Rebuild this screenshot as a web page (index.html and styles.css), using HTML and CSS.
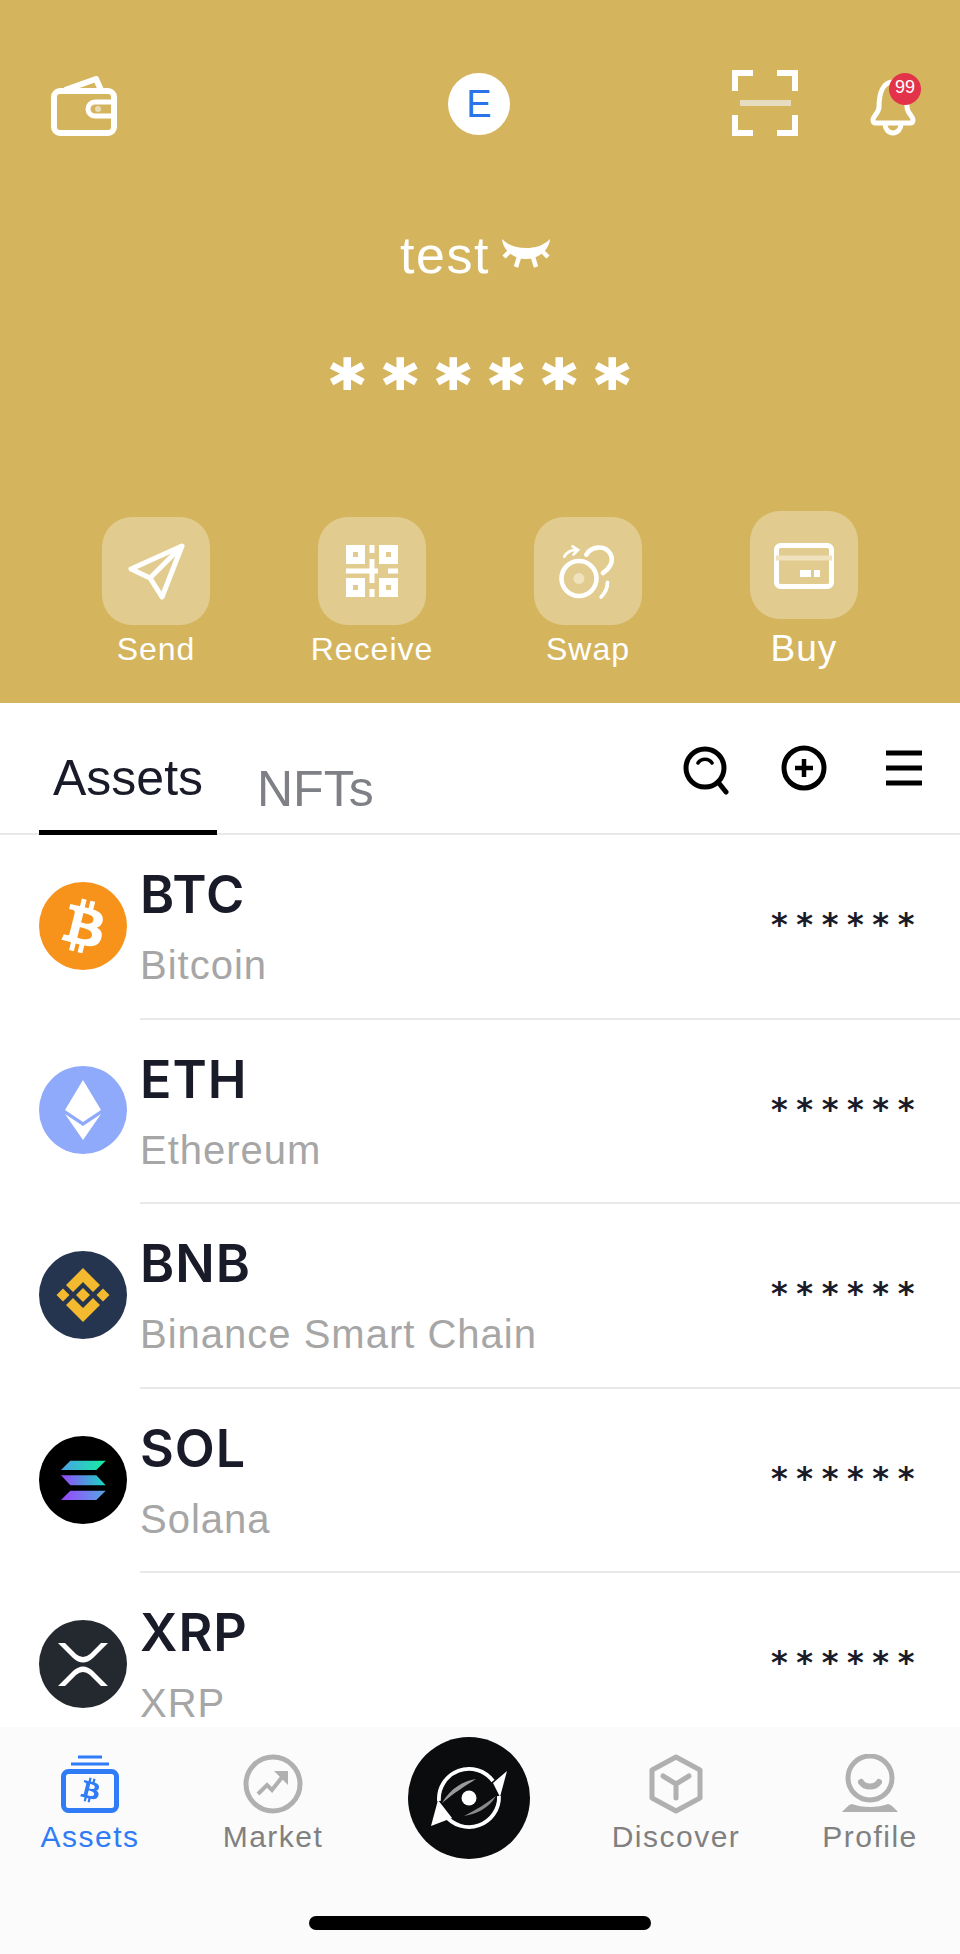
FILE: index.html
```html
<!DOCTYPE html>
<html lang="en">
  <head>
    <meta charset="UTF-8" />
    <meta name="viewport" content="width=device-width, initial-scale=1.0" />
    <title>Wallet Assets</title>
    <link rel="stylesheet" href="styles.css">
  </head>
  <body>
    <svg class="defs" width="0" height="0">
      <defs>
        <symbol id="btc" viewBox="0 0 32 32">
          <path d="M23.189 14.02c.314-2.096-1.283-3.223-3.465-3.975l.708-2.84-1.728-.43-.69 2.765c-.454-.114-.92-.22-1.385-.326l.695-2.783L15.596 6l-.708 2.839c-.376-.086-.746-.17-1.104-.26l.002-.009-2.384-.595-.46 1.846s1.283.294 1.256.312c.7.175.826.638.805 1.006l-.806 3.235c.048.012.11.03.18.057l-.183-.045-1.13 4.532c-.086.212-.303.531-.793.41.018.025-1.256-.313-1.256-.313l-.858 1.978 2.25.561c.418.105.828.215 1.231.318l-.715 2.872 1.727.43.708-2.84c.472.127.93.245 1.378.357l-.706 2.828 1.728.43.715-2.866c2.948.558 5.164.333 6.097-2.333.752-2.146-.037-3.385-1.588-4.192 1.13-.26 1.98-1.003 2.207-2.538zm-3.95 5.538c-.533 2.147-4.148.986-5.32.695l.95-3.805c1.172.293 4.929.872 4.37 3.11zm.535-5.569c-.487 1.953-3.495.96-4.47.717l.86-3.45c.975.243 4.118.696 3.61 2.733z"/>
        </symbol>
        <linearGradient id="sol-top" gradientUnits="userSpaceOnUse" x1="-22" y1="0" x2="23" y2="0">
          <stop offset="0" stop-color="#4aa0e6"/>
          <stop offset="1" stop-color="#14f1a0"/>
        </linearGradient>
        <linearGradient id="sol-mid" gradientUnits="userSpaceOnUse" x1="-22" y1="0" x2="23" y2="0">
          <stop offset="0" stop-color="#9945ff"/>
          <stop offset="1" stop-color="#14dcc0"/>
        </linearGradient>
        <linearGradient id="sol-low" gradientUnits="userSpaceOnUse" x1="-22" y1="0" x2="23" y2="0">
          <stop offset="0" stop-color="#9945ff"/>
          <stop offset="1" stop-color="#55a8e0"/>
        </linearGradient>
      </defs>
    </svg>

    <div class="phone">

      <header class="hero">
        <div class="top-bar">
          <svg class="wallet" viewBox="0 0 66 60" width="66" height="60" fill="none" stroke="#fff" stroke-width="6" stroke-linejoin="round">
            <rect x="3" y="15" width="60" height="42" rx="6"/>
            <path d="M14 14 L45 3 L50 14"/>
            <path d="M64 26 H44 a7 7 0 0 0 0 14 H64" stroke-width="5"/>
            <circle cx="47" cy="33" r="3" fill="#e9dcb6" stroke="none"/>
          </svg>
          <div class="logo"><span>E</span></div>
          <svg class="scan" viewBox="0 0 66 66" width="66" height="66" fill="none" stroke="#fff" stroke-width="6">
            <path d="M3 21 V3 H21"/>
            <path d="M45 3 H63 V21"/>
            <path d="M3 45 V63 H21"/>
            <path d="M45 63 H63 V45"/>
            <path d="M8 33 H59" stroke="#e6dcc0"/>
          </svg>
          <div class="bell">
            <svg viewBox="0 0 46 58" width="46" height="58" fill="none" stroke="#fff" stroke-width="5" stroke-linejoin="round">
              <path d="M23 3 C13 3 9 14 9 28 C9 34 3 37 3 41 C3 43 4 44 6 44 H40 C42 44 43 43 43 41 C43 37 37 34 37 28 C37 14 33 3 23 3 Z"/>
              <path d="M15 45 a8 9 0 0 0 16 0"/>
            </svg>
            <span class="badge">99</span>
          </div>
        </div>

        <div class="wallet-name">
          <span>test</span>
          <svg viewBox="0 0 50 34" width="50" height="34" fill="#fff" stroke="none">
            <path d="M1 1 C8 8 16 10 25 10 C34 10 42 8 49 1 C48 12 38 21 25 21 C12 21 2 12 1 1 Z"/>
            <path d="M8 14 L3 19 M18 19 L15 29 M32 19 L35 29 M42 14 L47 19" stroke="#fff" stroke-width="4.5"/>
          </svg>
        </div>

        <div class="balance">******</div>

        <div class="actions">
          <div class="action">
            <div class="action-icon">
              <svg viewBox="0 0 108 108" width="108" height="108" fill="none" stroke="#fff" stroke-width="5" stroke-linejoin="round">
                <path d="M80 29 L29 52 L48 61 L60 80 Z"/>
                <path d="M80 29 L48 61"/>
              </svg>
            </div>
            <p>Send</p>
          </div>
          <div class="action">
            <div class="action-icon">
              <svg viewBox="0 0 108 108" width="108" height="108" fill="none" stroke="#fff" stroke-width="7">
                <rect x="31.5" y="31.5" width="12" height="12"/>
                <rect x="64.5" y="31.5" width="12" height="12"/>
                <rect x="31.5" y="64.5" width="12" height="12"/>
                <rect x="64.5" y="64.5" width="12" height="12"/>
                <path d="M28 54 H60 M70 54 H80 M54 28 V36 M54 42 V66 M54 72 V80" stroke-width="5"/>
              </svg>
            </div>
            <p>Receive</p>
          </div>
          <div class="action">
            <div class="action-icon">
              <svg viewBox="0 0 108 108" width="108" height="108" fill="none" stroke="#fff" stroke-width="5" stroke-linecap="round">
                <g transform="translate(4.5 4.5) scale(0.92)">
                  <circle cx="44" cy="62" r="19"/>
                  <circle cx="44" cy="62" r="6" fill="#efe2bd" stroke="none"/>
                  <path d="M52 36 C57 27 72 25 78 35 C83 44 76 52 70 56"/>
                  <path d="M28 38 C31 33 35 31 40 31" stroke-width="3"/>
                  <path d="M37 27 L43 31 L38 36" stroke-width="3"/>
                  <path d="M75 66 C75 72 72 78 68 82" stroke-width="4"/>
                </g>
              </svg>
            </div>
            <p>Swap</p>
          </div>
          <div class="action action-raised">
            <div class="action-icon">
              <svg viewBox="0 0 108 108" width="108" height="108" fill="none" stroke="#fff" stroke-width="5">
                <rect x="26.5" y="34.5" width="55" height="41" rx="4"/>
                <path d="M26 47 H82" stroke="#efe2bd"/>
                <rect x="50" y="59" width="11" height="7" fill="#fff" stroke="none"/>
                <rect x="64" y="59" width="6" height="7" fill="#fff" stroke="none"/>
              </svg>
            </div>
            <p>Buy</p>
          </div>
        </div>
      </header>

      <div class="tabs">
        <div class="tab tab-active">Assets</div>
        <div class="tab">NFTs</div>
        <div class="tab-tools">
          <svg viewBox="0 0 46 50" width="46" height="50" fill="none" stroke="#000" stroke-width="5" stroke-linecap="round">
            <circle cx="22" cy="23" r="19"/>
            <path d="M35 37 L43 47"/>
            <path d="M15 18 C18 13 26 13 29 18" stroke-width="3.5"/>
          </svg>
          <svg viewBox="0 0 46 46" width="46" height="46" fill="none" stroke="#000" stroke-width="5">
            <circle cx="23" cy="23" r="20"/>
            <path d="M14 23 H32 M23 14 V32" stroke-width="4.5"/>
          </svg>
          <svg viewBox="0 0 40 40" width="40" height="40" fill="none" stroke="#000" stroke-width="5">
            <path d="M2 5 H38 M2 20 H38 M2 35 H38"/>
          </svg>
        </div>
      </div>

      <div class="coin-list">

        <div class="coin">
          <svg class="coin-icon" viewBox="0 0 32 32" width="88" height="88">
            <circle cx="16" cy="16" r="16" fill="#f7931a"/>
            <use href="#btc" width="32" height="32" fill="#fff"/>
          </svg>
          <div class="coin-body">
            <div class="coin-text">
              <p class="ticker">BTC</p>
              <p class="coin-name">Bitcoin</p>
            </div>
            <div class="coin-value">******</div>
          </div>
        </div>

        <div class="coin">
          <svg class="coin-icon" viewBox="-44 -44 88 88" width="88" height="88">
            <circle r="44" fill="#8fa9fb"/>
            <path d="M0 -30 L18 0 L0 12 L-18 0 Z" fill="#fff"/>
            <path d="M-18 4 L0 16 L18 4 L0 30 Z" fill="#fff"/>
          </svg>
          <div class="coin-body">
            <div class="coin-text">
              <p class="ticker">ETH</p>
              <p class="coin-name">Ethereum</p>
            </div>
            <div class="coin-value">******</div>
          </div>
        </div>

        <div class="coin">
          <svg class="coin-icon" viewBox="-44 -44 88 88" width="88" height="88">
            <circle r="44" fill="#25344f"/>
            <g fill="#f3ba2f">
              <path d="M0 -27 L17 -10 L10 -3 L0 -13 L-10 -3 L-17 -10 Z"/>
              <path d="M0 27 L17 10 L10 3 L0 13 L-10 3 L-17 10 Z"/>
              <path d="M0 -7 L7 0 L0 7 L-7 0 Z"/>
              <path d="M-20 -6.5 L-13.5 0 L-20 6.5 L-26.5 0 Z"/>
              <path d="M20 -6.5 L26.5 0 L20 6.5 L13.5 0 Z"/>
            </g>
          </svg>
          <div class="coin-body">
            <div class="coin-text">
              <p class="ticker">BNB</p>
              <p class="coin-name">Binance Smart Chain</p>
            </div>
            <div class="coin-value">******</div>
          </div>
        </div>

        <div class="coin">
          <svg class="coin-icon" viewBox="-44 -44 88 88" width="88" height="88">
            <circle r="44" fill="#000"/>
            <path d="M-12.7 -19.3 H22.7 L13.3 -10 H-22 Z" fill="url(#sol-top)"/>
            <path d="M-22 -4.7 H13.3 L22.7 5.3 H-12.7 Z" fill="url(#sol-mid)"/>
            <path d="M-12.7 10.7 H22.7 L13.3 20 H-22 Z" fill="url(#sol-low)"/>
          </svg>
          <div class="coin-body">
            <div class="coin-text">
              <p class="ticker">SOL</p>
              <p class="coin-name">Solana</p>
            </div>
            <div class="coin-value">******</div>
          </div>
        </div>

        <div class="coin">
          <svg class="coin-icon" viewBox="-44 -44 88 88" width="88" height="88">
            <circle r="44" fill="#23292f"/>
            <g fill="#fff">
              <path d="M-25 -21 H-18 L-7 -10 Q0 -4 7 -10 L18 -21 H25 L10 -6 Q0 3 -10 -6 Z"/>
              <path d="M-25 22 H-18 L-7 11 Q0 5 7 11 L18 22 H25 L10 7 Q0 -2 -10 7 Z"/>
            </g>
          </svg>
          <div class="coin-body">
            <div class="coin-text">
              <p class="ticker">XRP</p>
              <p class="coin-name">XRP</p>
            </div>
            <div class="coin-value">******</div>
          </div>
        </div>

      </div>

      <nav class="tab-bar">
        <div class="nav-row">
          <div class="nav-item nav-active">
            <svg viewBox="0 0 60 60" width="60" height="60" fill="none" stroke="#2f7cf6" stroke-width="3">
              <path d="M18 3 H42 M11 10 H49"/>
              <rect x="3.5" y="17.5" width="53" height="39" rx="5" stroke-width="5"/>
              <use href="#btc" x="10" y="16" width="40" height="40" fill="#2f7cf6" stroke="none"/>
            </svg>
            <span>Assets</span>
          </div>
          <div class="nav-item">
            <svg viewBox="0 0 60 60" width="60" height="60" fill="none" stroke="#b0b0b0" stroke-width="5">
              <circle cx="30" cy="30" r="27"/>
              <path d="M15 40 L24 31 L29 36 L40 22" stroke-width="4"/>
              <path d="M31 17 H45 V31 Z" fill="#b0b0b0" stroke="none"/>
            </svg>
            <span>Market</span>
          </div>
          <div class="nav-center">
            <svg viewBox="-61 -61 122 122" width="122" height="122" fill="none">
              <circle r="61" fill="#0b0c0e"/>
              <path d="M-30 3 A30 30 0 0 1 24 -17" stroke="#fff" stroke-width="3.8"/>
              <path d="M30 -2 A30 30 0 0 1 -24 17" stroke="#fff" stroke-width="3.8"/>
              <path d="M-38 28 L-31 2 L-17 20 Z" fill="#fff"/>
              <path d="M38 -27 L31 -1 L24 -15 Z" fill="#fff"/>
              <path d="M-27 5 C-18 -10 -6 -17 7 -19 C-4 -12 -15 -5 -27 5 Z" fill="#9a9a9a"/>
              <path d="M27 -2 C20 10 8 16 -5 18 C7 12 18 5 27 -2 Z" fill="#8a8a8a"/>
              <circle r="7.5" fill="#fff"/>
            </svg>
          </div>
          <div class="nav-item">
            <svg viewBox="0 0 60 60" width="60" height="60" fill="none" stroke="#b0b0b0" stroke-width="5" stroke-linejoin="round" stroke-linecap="round">
              <path d="M30 3 L54 16 V44 L30 57 L6 44 V16 Z"/>
              <path d="M17 22 L30 30 L43 22 M30 30 V44"/>
            </svg>
            <span>Discover</span>
          </div>
          <div class="nav-item">
            <svg viewBox="0 0 60 60" width="60" height="60" fill="none" stroke="#b0b0b0" stroke-width="5" stroke-linecap="round">
              <circle cx="30" cy="24" r="22"/>
              <path d="M21 28 C25 34 35 34 39 28" stroke-width="6"/>
              <path d="M2 58 C6 54 8 51 12 50 C22 54 38 54 48 50 C52 51 54 54 58 58 Z" fill="#b0b0b0" stroke="none"/>
            </svg>
            <span>Profile</span>
          </div>
        </div>
        <div class="home-bar"></div>
      </nav>

    </div>
  </body>
</html>
```

FILE: styles.css
```css
*{
  margin: 0;
  padding: 0;
  box-sizing: border-box;
}

body{
  font-family: "Liberation Sans", Arial, sans-serif;
  background-color: #fff;
}

.defs{
  display: block;
  height: 0;
}

.phone{
  width: 960px;
  height: 1954px;
  display: flex;
  flex-direction: column;
  overflow: hidden;
}

/* top gold part */
.hero{
  height: 703px;
  background-color: #d4b55e;
  padding-top: 70px;
  color: #fff;
  flex-shrink: 0;
}

.top-bar{
  height: 66px;
  position: relative;
  display: flex;
  align-items: center;
  padding-left: 51px;
}

.wallet{
  margin-top: 6px;
}

.logo{
  width: 62px;
  height: 62px;
  margin-left: 331px;
  margin-top: 2px;
  border-radius: 50%;
  background-color: #fff;
  display: flex;
  justify-content: center;
  align-items: center;
}

.logo span{
  font-size: 38px;
  color: #2a73e8;
}

.scan{
  margin-left: 222px;
}

.bell{
  position: relative;
  width: 46px;
  height: 58px;
  margin-left: 72px;
  margin-top: 10px;
}

.badge{
  position: absolute;
  left: 19px;
  top: -6px;
  width: 32px;
  height: 32px;
  border-radius: 50%;
  background-color: #e2334a;
  font-size: 18px;
  line-height: 28px;
  text-align: center;
}

.wallet-name{
  display: flex;
  justify-content: center;
  align-items: center;
  gap: 11px;
  margin-top: 90px;
  font-size: 52px;
  letter-spacing: 1.5px;
  line-height: 58px;
  padding-right: 9px;
}

.balance{
  text-align: center;
  font-family: "DejaVu Sans", sans-serif;
  font-weight: bold;
  font-size: 66px;
  letter-spacing: 18.5px;
  -webkit-text-stroke: 2px #fff;
  line-height: 90px;
  margin-top: 56px;
  padding-left: 18px;
}

.actions{
  display: grid;
  grid-template-columns: repeat(4, 216px);
  padding-left: 48px;
  margin-top: 87px;
}

.action{
  display: flex;
  flex-direction: column;
  align-items: center;
}

.action-icon{
  width: 108px;
  height: 108px;
  border-radius: 30px;
  background-color: rgba(255, 255, 255, 0.3);
}

.action-icon svg{
  display: block;
}

.action p{
  font-size: 32px;
  letter-spacing: 1px;
  line-height: 36px;
  margin-top: 6px;
}

.action-raised{
  margin-top: -6px;
}

.action-raised p{
  font-size: 37px;
  letter-spacing: 1px;
  line-height: 42px;
  margin-top: 9px;
}

/* tabs */
.tabs{
  height: 132px;
  flex-shrink: 0;
  display: flex;
  position: relative;
  border-bottom: 2px solid #e8e8e8;
  padding-left: 39px;
}

.tab{
  font-size: 50px;
  color: #7f8086;
  line-height: 54px;
  margin-top: 59px;
  margin-left: 40px;
}

.tab-active{
  color: #1a1b29;
  width: 178px;
  margin-left: 0;
  margin-top: 0;
  padding-top: 48px;
  height: 132px;
  text-align: center;
  border-bottom: 5px solid #000;
}

.tab-tools{
  display: flex;
  align-items: flex-start;
  position: absolute;
  top: 42px;
  left: 683px;
  gap: 52px;
}

.tab-tools svg:nth-child(3){
  margin-left: 5px;
  margin-top: 3px;
}

/* coin rows */
.coin-list{
  flex: 1;
  overflow: hidden;
  padding-left: 39px;
}

.coin{
  display: flex;
  align-items: center;
  height: 184.6px;
  gap: 13px;
}

.coin-icon{
  flex-shrink: 0;
  margin-bottom: 3px;
}

.coin-body{
  flex: 1;
  height: 100%;
  display: flex;
  justify-content: space-between;
  border-bottom: 2px solid #e8e8e8;
  padding-right: 37px;
}

.coin-text{
  padding-top: 31px;
}

.ticker{
  font-family: Inter, sans-serif;
  font-weight: 600;
  font-size: 52px;
  letter-spacing: 1px;
  line-height: 58px;
  color: #1a1b29;
}

.coin-name{
  font-size: 40px;
  letter-spacing: 1px;
  line-height: 44px;
  margin-top: 19px;
  color: #a6a6a6;
}

.coin-value{
  font-family: "DejaVu Sans", sans-serif;
  font-weight: bold;
  font-size: 32px;
  letter-spacing: 8.6px;
  color: #1a1b29;
  padding-top: 70px;
}

/* bottom bar */
.tab-bar{
  height: 227px;
  flex-shrink: 0;
  background-color: #fbfbfb;
  padding-top: 27px;
}

.nav-row{
  display: grid;
  grid-template-columns: 180px 186px 206px 208px 180px;
  height: 105px;
}

.nav-item{
  display: flex;
  flex-direction: column;
  align-items: center;
  font-size: 30px;
  letter-spacing: 1.5px;
  color: #808080;
}

.nav-item svg{
  display: block;
}

.nav-item span{
  line-height: 36px;
  margin-top: 5px;
}

.nav-active{
  color: #2f7cf6;
}

.nav-center{
  display: flex;
  justify-content: center;
  margin-top: -17px;
}

.home-bar{
  width: 342px;
  height: 14px;
  border-radius: 7px;
  background-color: #000;
  margin: 57px auto 0;
}
```
